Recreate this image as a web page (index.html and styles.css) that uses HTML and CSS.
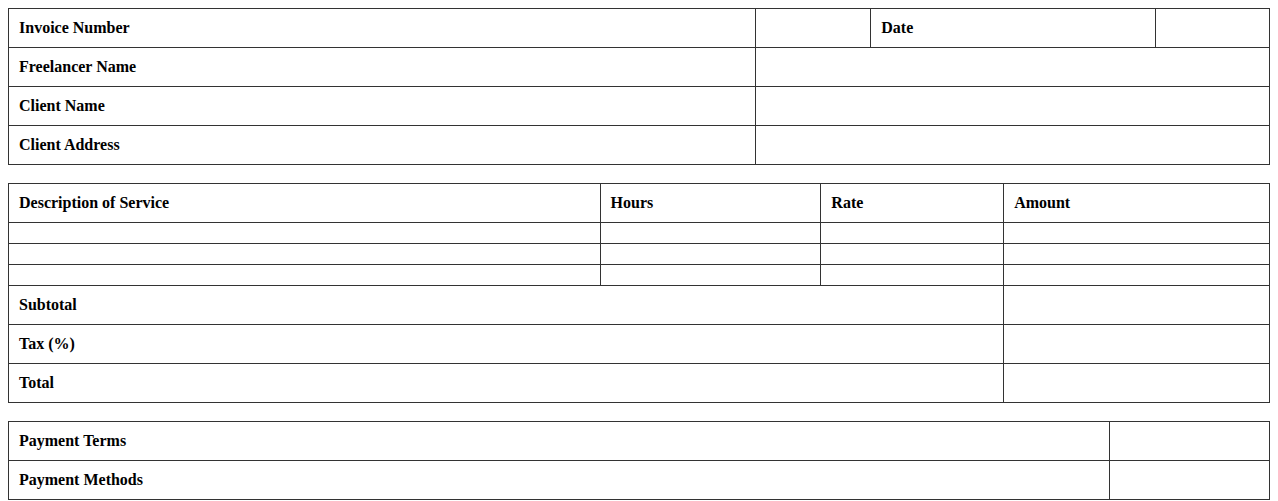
FILE: index.html
```html
<!DOCTYPE html>
<html>
<head>
<meta charset="utf-8">
<link rel="stylesheet" href="styles.css">
</head>
<body>
<table class="grid">
  <colgroup><col class="t1a"><col class="t1b"><col class="t1c"><col class="t1d"></colgroup>
  <tr><th>Invoice Number</th><td></td><th>Date</th><td></td></tr>
  <tr><th>Freelancer Name</th><td colspan="3"></td></tr>
  <tr><th>Client Name</th><td colspan="3"></td></tr>
  <tr><th>Client Address</th><td colspan="3"></td></tr>
</table>
<table class="grid">
  <colgroup><col class="t2a"><col class="t2b"><col class="t2c"><col class="t2d"></colgroup>
  <tr><th>Description of Service</th><th>Hours</th><th>Rate</th><th>Amount</th></tr>
  <tr class="empty"><td></td><td></td><td></td><td></td></tr>
  <tr class="empty"><td></td><td></td><td></td><td></td></tr>
  <tr class="empty"><td></td><td></td><td></td><td></td></tr>
  <tr><th colspan="3">Subtotal</th><td></td></tr>
  <tr><th colspan="3">Tax (%)</th><td></td></tr>
  <tr><th colspan="3">Total</th><td></td></tr>
</table>
<table class="grid">
  <colgroup><col class="t3a"><col class="t3b"></colgroup>
  <tr><th>Payment Terms</th><td></td></tr>
  <tr><th>Payment Methods</th><td></td></tr>
</table>
</body>
</html>
```
FILE: styles.css
```css
body {
  margin: 8px;
  font-family: "Liberation Serif", "Times New Roman", serif;
  font-size: 16px;
  color: #000;
  background: #fff;
}
.grid {
  width: 100%;
  border-collapse: collapse;
  table-layout: fixed;
  margin-bottom: 18px;
}
.grid th, .grid td {
  border: 1px solid #333;
  padding: 10px;
  text-align: left;
  font-weight: bold;
  line-height: 18px;
  height: 18px;
  vertical-align: middle;
}
.grid tr.empty td {
  height: 0;
  line-height: 0;
}
.t1a { width: 59.27%; }
.t1b { width: 9.11%; }
.t1c { width: 22.58%; }
.t1d { width: 9.04%; }
.t2a { width: 46.91%; }
.t2b { width: 17.51%; }
.t2c { width: 14.50%; }
.t2d { width: 21.08%; }
.t3a { width: 87.32%; }
.t3b { width: 12.68%; }
```
